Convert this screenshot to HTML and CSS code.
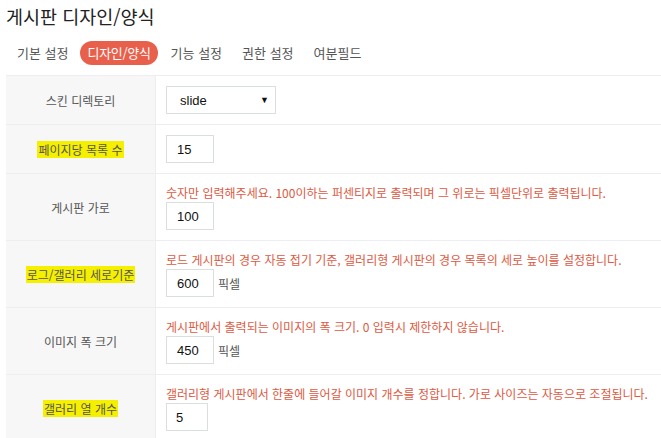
FILE: index.html
```html
<!DOCTYPE html>
<html lang="ko">
<head>
<meta charset="utf-8">
<link rel="stylesheet" href="styles.css">
</head>
<body>
<h1 class="title">게시판 디자인/양식</h1>
<nav class="tabs">
  <span class="tab">기본 설정</span>
  <span class="tab active">디자인/양식</span>
  <span class="tab">기능 설정</span>
  <span class="tab">권한 설정</span>
  <span class="tab">여분필드</span>
</nav>
<div class="form">
  <div class="row">
    <div class="label">스킨 디렉토리</div>
    <div class="field">
      <div class="select"><span>slide</span><span class="arrow">▼</span></div>
    </div>
  </div>
  <div class="row">
    <div class="label"><mark>페이지당 목록 수</mark></div>
    <div class="field"><div class="input">15</div></div>
  </div>
  <div class="row">
    <div class="label">게시판 가로</div>
    <div class="field">
      <p class="help">숫자만 입력해주세요. 100이하는 퍼센티지로 출력되며 그 위로는 픽셀단위로 출력됩니다.</p>
      <div class="input">100</div>
    </div>
  </div>
  <div class="row">
    <div class="label"><mark>로그/갤러리 세로기준</mark></div>
    <div class="field">
      <p class="help">로드 게시판의 경우 자동 접기 기준, 갤러리형 게시판의 경우 목록의 세로 높이를 설정합니다.</p>
      <div class="inline"><div class="input">600</div><span class="unit">픽셀</span></div>
    </div>
  </div>
  <div class="row">
    <div class="label">이미지 폭 크기</div>
    <div class="field">
      <p class="help">게시판에서 출력되는 이미지의 폭 크기. 0 입력시 제한하지 않습니다.</p>
      <div class="inline"><div class="input">450</div><span class="unit">픽셀</span></div>
    </div>
  </div>
  <div class="row">
    <div class="label"><mark>갤러리 열 개수</mark></div>
    <div class="field">
      <p class="help">갤러리형 게시판에서 한줄에 들어갈 이미지 개수를 정합니다. 가로 사이즈는 자동으로 조절됩니다.</p>
      <div class="input narrow">5</div>
    </div>
  </div>
</div>
</body>
</html>
```
FILE: styles.css
```css
html, body {
  margin: 0;
  padding: 0;
  background: #fff;
}
body {
  font-family: "Noto Sans CJK KR", "Noto Sans", sans-serif;
  overflow: hidden;
}
.title {
  margin: 0;
  padding: 3px 0 0 6px;
  font-size: 18.5px;
  font-weight: normal;
  line-height: 26px;
  color: #222;
}
.tabs {
  display: flex;
  align-items: center;
  margin: 12px 0 0 7px;
  height: 24px;
}
.tab {
  font-size: 13px;
  color: #555;
  padding: 0 10px;
  line-height: 24px;
}
.tab.active {
  background: #e8604c;
  color: #fff;
  border-radius: 12px;
  padding: 0 7px;
  margin: 0 3px 0 2px;
  letter-spacing: -0.3px;
}
.form {
  margin: 10px 0 0 6px;
  border-top: 1px solid #eceef2;
}
.row {
  display: flex;
  border-bottom: 1px solid #eceef2;
}
.label {
  width: 149px;
  flex: none;
  background: #f7f7f7;
  border-right: 1px solid #eceef2;
  display: flex;
  align-items: center;
  justify-content: center;
  font-size: 12px;
  color: #555;
}
mark {
  background: #f5f000;
  color: #555;
  padding: 0 1px;
}
.field {
  flex: 1;
  padding: 10px;
}
.help {
  margin: 0;
  font-size: 12px;
  line-height: 18px;
  color: #dc5a43;
  white-space: nowrap;
}
.select, .input {
  box-sizing: border-box;
  height: 28px;
  border: 1px solid #d9dedf;
  font-family: "Liberation Sans", Arial, sans-serif;
  font-size: 13px;
  color: #111;
  display: flex;
  align-items: center;
}
.select {
  width: 110px;
  padding: 0 6px 0 13px;
  justify-content: space-between;
}
.arrow {
  font-size: 9px;
}
.input {
  width: 48px;
  padding-left: 10px;
}
.input.narrow {
  width: 42px;
  padding-left: 9px;
}
.inline {
  display: flex;
  align-items: center;
}
.unit {
  margin-left: 4px;
  font-size: 12px;
  color: #555;
}
```
